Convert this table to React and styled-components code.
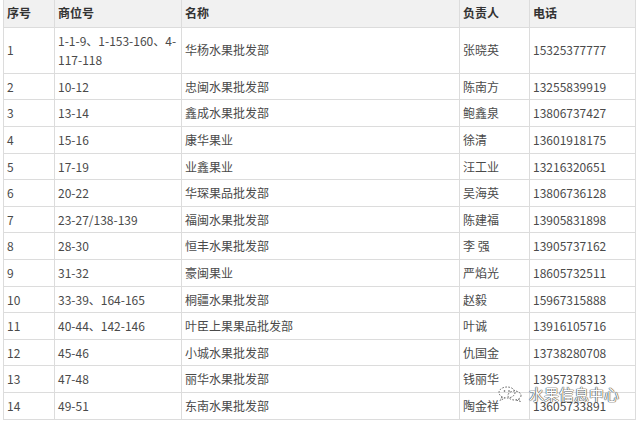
import React from "react";
import styled, { createGlobalStyle } from "styled-components";

const GlobalStyle = createGlobalStyle`
  html, body {
    margin: 0;
    padding: 0;
    background: #fff;
  }
  body {
    font-family: "Noto Sans CJK SC", "Noto Sans", sans-serif;
    overflow: hidden;
  }
`;

const Page = styled.div`
  position: relative;
  width: 640px;
  height: 422px;
  overflow: hidden;
  padding-left: 3px;
  box-sizing: border-box;
`;

const Table = styled.table`
  width: 632px;
  table-layout: fixed;
  border-collapse: collapse;
  margin-top: -1px;
  font-size: 12px;
  color: #4a4a4a;
`;

const Th = styled.th`
  width: ${(p) => p.w - 7}px;
  text-align: left;
  font-weight: bold;
  color: #333;
  background: #f1f1f1;
  border: 1px solid #dcdcdc;
  padding: 3px 3px 4px;
  line-height: 19.6px;
`;

const Td = styled.td`
  border: 1px solid #dcdcdc;
  padding: 3px 3px;
  line-height: 19.6px;
  vertical-align: middle;
  white-space: nowrap;
  overflow: hidden;
`;

const Watermark = styled.div`
  position: absolute;
  right: 21px;
  bottom: 20px;
  display: flex;
  align-items: center;
  gap: 5px;
`;

const MarkText = styled.span`
  font-size: 15px;
  line-height: 16px;
  color: #fff;
  text-shadow: 0 0 1px #444, 0 0 1px #444, 0 0 1px #444;
`;

const ChatIcon = () => (
  <svg width="28" height="16" viewBox="0 0 28 16">
    <g fill="none" stroke="#555" strokeWidth="0.9" strokeDasharray="1.6 1.4">
      <ellipse cx="11" cy="6.5" rx="8" ry="5.5" />
      <path d="M6 11 L4 14.5 L9 12" />
      <ellipse cx="18.5" cy="9.5" rx="6.5" ry="4.5" />
      <path d="M22.5 13 L24.5 15.5 L20 14" />
    </g>
    <circle cx="8.5" cy="5" r="0.8" fill="#555" />
    <circle cx="13" cy="5" r="0.8" fill="#555" />
  </svg>
);

const columns = [
  { key: "no", label: "序号", w: 51 },
  { key: "stall", label: "商位号", w: 127 },
  { key: "name", label: "名称", w: 278 },
  { key: "owner", label: "负责人", w: 70 },
  { key: "phone", label: "电话", w: 106 },
];

const rows = [
  ["1", <>1-1-9、1-153-160、4-<br />117-118</>, "华杨水果批发部", "张晓英", "15325377777"],
  ["2", "10-12", "忠闽水果批发部", "陈南方", "13255839919"],
  ["3", "13-14", "鑫成水果批发部", "鲍鑫泉", "13806737427"],
  ["4", "15-16", "康华果业", "徐清", "13601918175"],
  ["5", "17-19", "业鑫果业", "汪工业", "13216320651"],
  ["6", "20-22", "华琛果品批发部", "吴海英", "13806736128"],
  ["7", "23-27/138-139", "福闽水果批发部", "陈建福", "13905831898"],
  ["8", "28-30", "恒丰水果批发部", "李 强", "13905737162"],
  ["9", "31-32", "豪闽果业", "严焰光", "18605732511"],
  ["10", "33-39、164-165", "桐疆水果批发部", "赵毅", "15967315888"],
  ["11", "40-44、142-146", "叶臣上果果品批发部", "叶诚", "13916105716"],
  ["12", "45-46", "小城水果批发部", "仇国金", "13738280708"],
  ["13", "47-48", "丽华水果批发部", "钱丽华", "13957378313"],
  ["14", "49-51", "东南水果批发部", "陶金祥", "13605733891"],
];

export default function App() {
  return (
    <Page>
      <GlobalStyle />
      <Table>
        <thead>
          <tr>
            {columns.map((c) => (
              <Th key={c.key} w={c.w}>
                {c.label}
              </Th>
            ))}
          </tr>
        </thead>
        <tbody>
          {rows.map((r, i) => (
            <tr key={i}>
              {r.map((cell, j) => (
                <Td key={j}>{cell}</Td>
              ))}
            </tr>
          ))}
        </tbody>
      </Table>
      <Watermark>
        <ChatIcon />
        <MarkText>水果信息中心</MarkText>
      </Watermark>
    </Page>
  );
}
